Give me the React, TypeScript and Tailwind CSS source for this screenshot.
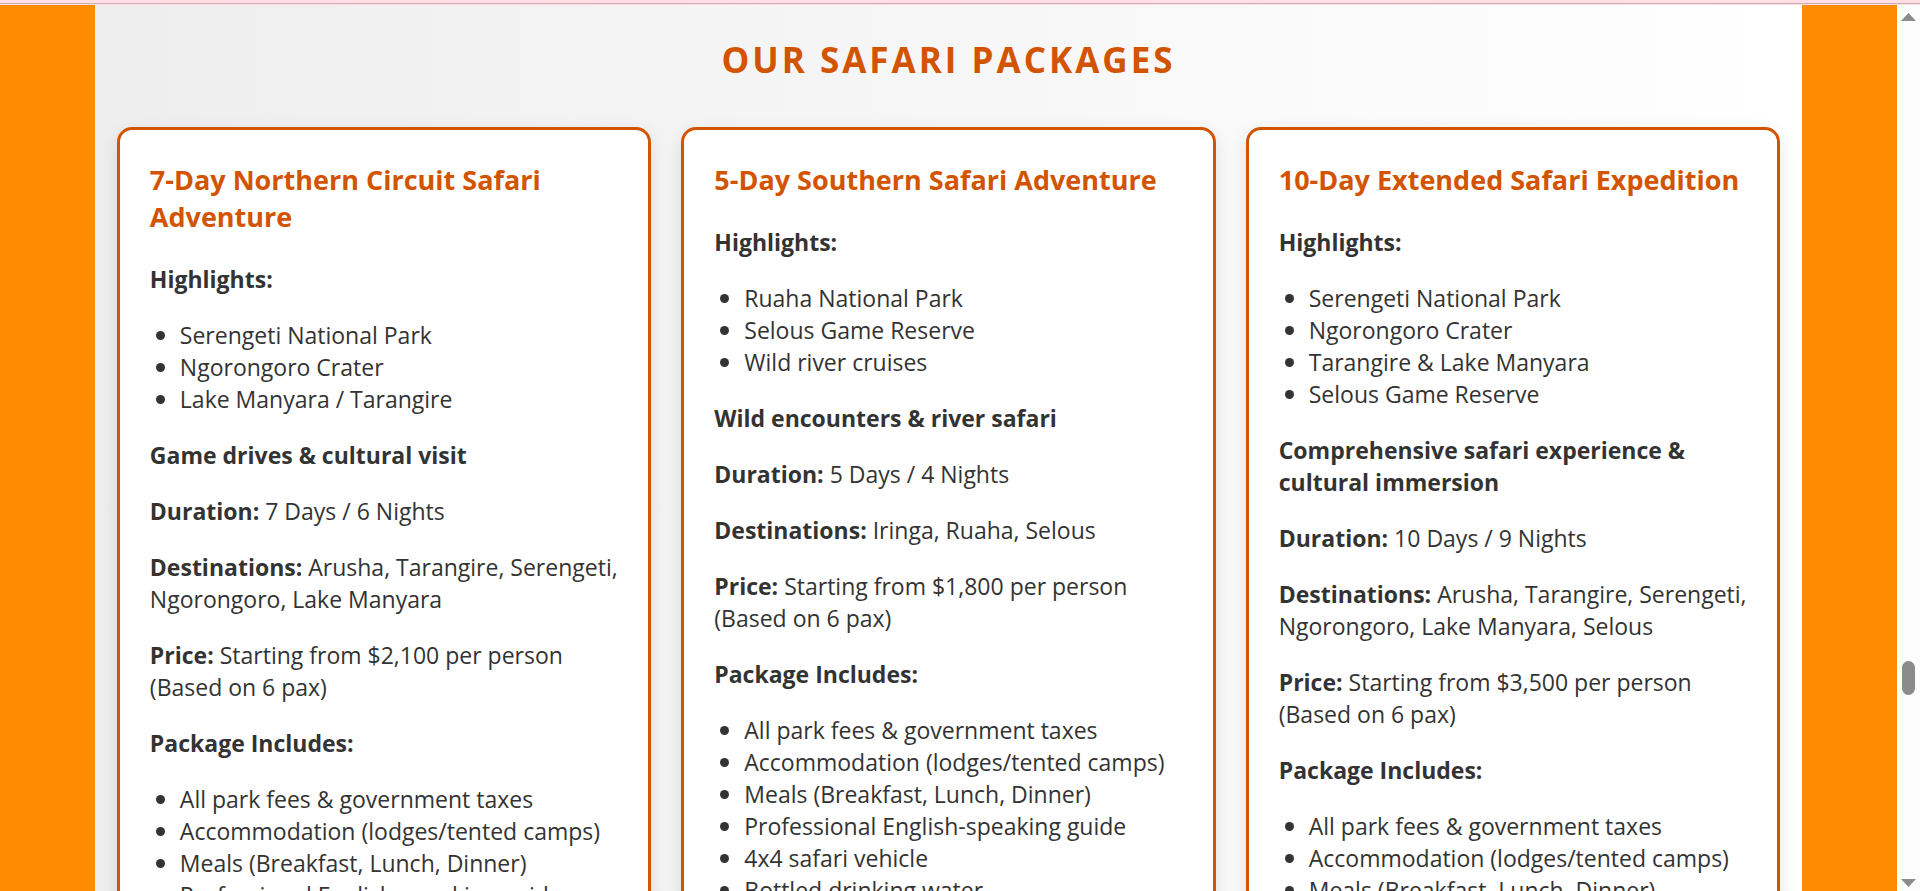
type Package = {
  title: string;
  highlights: string[];
  summary: string;
  duration: string;
  destinations: string;
  price: string;
};

const packages: Package[] = [
  {
    title: "7-Day Northern Circuit Safari Adventure",
    highlights: ["Serengeti National Park", "Ngorongoro Crater", "Lake Manyara / Tarangire"],
    summary: "Game drives & cultural visit",
    duration: "7 Days / 6 Nights",
    destinations: "Arusha, Tarangire, Serengeti, Ngorongoro, Lake Manyara",
    price: "Starting from $2,100 per person (Based on 6 pax)",
  },
  {
    title: "5-Day Southern Safari Adventure",
    highlights: ["Ruaha National Park", "Selous Game Reserve", "Wild river cruises"],
    summary: "Wild encounters & river safari",
    duration: "5 Days / 4 Nights",
    destinations: "Iringa, Ruaha, Selous",
    price: "Starting from $1,800 per person (Based on 6 pax)",
  },
  {
    title: "10-Day Extended Safari Expedition",
    highlights: [
      "Serengeti National Park",
      "Ngorongoro Crater",
      "Tarangire & Lake Manyara",
      "Selous Game Reserve",
    ],
    summary: "Comprehensive safari experience & cultural immersion",
    duration: "10 Days / 9 Nights",
    destinations: "Arusha, Tarangire, Serengeti, Ngorongoro, Lake Manyara, Selous",
    price: "Starting from $3,500 per person (Based on 6 pax)",
  },
];

const includes = [
  "All park fees & government taxes",
  "Accommodation (lodges/tented camps)",
  "Meals (Breakfast, Lunch, Dinner)",
  "Professional English-speaking guide",
  "4x4 safari vehicle",
  "Bottled drinking water",
];

function BulletList({ items }: { items: string[] }) {
  return (
    <ul className="pl-1.5">
      {items.map((item) => (
        <li
          key={item}
          className="flex items-center gap-[15px] before:size-[9px] before:shrink-0 before:rounded-full before:bg-[#333333]"
        >
          {item}
        </li>
      ))}
    </ul>
  );
}

function PackageCard({ pkg }: { pkg: Package }) {
  return (
    <article className="flex flex-col gap-6 rounded-[15px] border-3 border-[#d35400] bg-white pt-[31px] pr-6 pb-[30px] pl-[30px] text-[23px] leading-8 text-[#333333] shadow-[0_6px_18px_rgba(0,0,0,0.1)]">
      <h3 className="mb-1 text-[27px] leading-[37px] font-bold text-[#d35400]">{pkg.title}</h3>
      <p className="font-bold">Highlights:</p>
      <BulletList items={pkg.highlights} />
      <p className="font-bold">{pkg.summary}</p>
      <p>
        <strong>Duration:</strong> {pkg.duration}
      </p>
      <p>
        <strong>Destinations:</strong> {pkg.destinations}
      </p>
      <p>
        <strong>Price:</strong> {pkg.price}
      </p>
      <p className="font-bold">Package Includes:</p>
      <BulletList items={includes} />
    </article>
  );
}

function ScrollTrack() {
  return (
    <div
      aria-hidden="true"
      className="flex w-[23px] shrink-0 flex-col items-center bg-[#fcfcfc] pt-2 pb-1"
    >
      <svg width="15" height="8" viewBox="0 0 15 8" fill="#8b8b8b">
        <path d="M7.5 0 15 8H0z" />
      </svg>
      <div className="grow-[640]" />
      <div className="h-[34px] w-[13px] rounded-full bg-[#8b8b8b]" />
      <div className="grow-[184]" />
      <svg width="15" height="8" viewBox="0 0 15 8" fill="#8b8b8b">
        <path d="M0 0H15L7.5 8z" />
      </svg>
    </div>
  );
}

export default function App() {
  return (
    <div className="flex h-screen flex-col overflow-hidden font-['Open_Sans','Noto_Sans',sans-serif]">
      <div className="h-[5px] shrink-0 bg-[#ffdee4] pt-[3px]">
        <div className="h-px bg-[#cfabb2]" />
      </div>
      <div className="flex min-h-0 flex-1">
        <main className="min-w-0 flex-1 overflow-hidden bg-[#ff8c00]">
          <section className="mx-[5%] bg-linear-to-r from-[#eeeeee] to-white px-[22px] py-[30px]">
            <h2 className="mb-[42px] text-center text-[35px] leading-[50px] font-bold tracking-[3px] text-[#d35400] uppercase">
              Our Safari Packages
            </h2>
            <div className="grid grid-cols-3 gap-[30px]">
              {packages.map((pkg) => (
                <PackageCard key={pkg.title} pkg={pkg} />
              ))}
            </div>
          </section>
        </main>
        <ScrollTrack />
      </div>
    </div>
  );
}
